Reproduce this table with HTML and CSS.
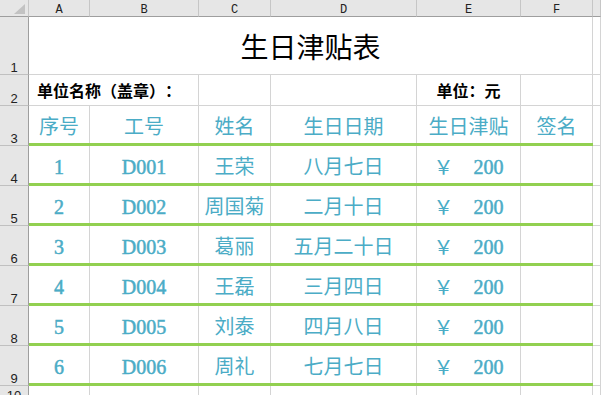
FILE: index.html
```html
<!DOCTYPE html>
<html lang="zh-CN">
<head>
<meta charset="utf-8">
<title>生日津贴表</title>
<link rel="stylesheet" href="styles.css">
</head>
<body>
<div class="sheet">
  <div class="row colhead">
    <div class="cell corner"><div class="tri"></div></div>
    <div class="cell">A</div>
    <div class="cell">B</div>
    <div class="cell">C</div>
    <div class="cell">D</div>
    <div class="cell">E</div>
    <div class="cell">F</div>
    <div class="cell"></div>
  </div>

  <div class="row r1">
    <div class="cell rh">1</div>
    <div class="cell title">生日津贴表</div>
    <div class="cell"></div>
  </div>

  <div class="row r2">
    <div class="cell rh">2</div>
    <div class="cell label">单位名称（盖章）：</div>
    <div class="cell"></div>
    <div class="cell"></div>
    <div class="cell unit">单位：元</div>
    <div class="cell"></div>
    <div class="cell"></div>
  </div>

  <div class="row data">
    <div class="cell rh">3</div>
    <div class="cell">序号</div>
    <div class="cell">工号</div>
    <div class="cell">姓名</div>
    <div class="cell">生日日期</div>
    <div class="cell">生日津贴</div>
    <div class="cell">签名</div>
    <div class="cell g"></div>
    <div class="rule"></div>
  </div>

  <div class="row data">
    <div class="cell rh">4</div>
    <div class="cell num">1</div>
    <div class="cell num">D001</div>
    <div class="cell">王荣</div>
    <div class="cell">八月七日</div>
    <div class="cell money"><span class="yen">￥</span><span class="num">200</span></div>
    <div class="cell"></div>
    <div class="cell g"></div>
    <div class="rule"></div>
  </div>

  <div class="row data">
    <div class="cell rh">5</div>
    <div class="cell num">2</div>
    <div class="cell num">D002</div>
    <div class="cell">周国菊</div>
    <div class="cell">二月十日</div>
    <div class="cell money"><span class="yen">￥</span><span class="num">200</span></div>
    <div class="cell"></div>
    <div class="cell g"></div>
    <div class="rule"></div>
  </div>

  <div class="row data">
    <div class="cell rh">6</div>
    <div class="cell num">3</div>
    <div class="cell num">D003</div>
    <div class="cell">葛丽</div>
    <div class="cell">五月二十日</div>
    <div class="cell money"><span class="yen">￥</span><span class="num">200</span></div>
    <div class="cell"></div>
    <div class="cell g"></div>
    <div class="rule"></div>
  </div>

  <div class="row data">
    <div class="cell rh">7</div>
    <div class="cell num">4</div>
    <div class="cell num">D004</div>
    <div class="cell">王磊</div>
    <div class="cell">三月四日</div>
    <div class="cell money"><span class="yen">￥</span><span class="num">200</span></div>
    <div class="cell"></div>
    <div class="cell g"></div>
    <div class="rule"></div>
  </div>

  <div class="row data">
    <div class="cell rh">8</div>
    <div class="cell num">5</div>
    <div class="cell num">D005</div>
    <div class="cell">刘泰</div>
    <div class="cell">四月八日</div>
    <div class="cell money"><span class="yen">￥</span><span class="num">200</span></div>
    <div class="cell"></div>
    <div class="cell g"></div>
    <div class="rule"></div>
  </div>

  <div class="row data">
    <div class="cell rh">9</div>
    <div class="cell num">6</div>
    <div class="cell num">D006</div>
    <div class="cell">周礼</div>
    <div class="cell">七月七日</div>
    <div class="cell money"><span class="yen">￥</span><span class="num">200</span></div>
    <div class="cell"></div>
    <div class="cell g"></div>
    <div class="rule"></div>
  </div>

  <div class="row r10">
    <div class="cell rh">10</div>
    <div class="cell"></div>
    <div class="cell"></div>
    <div class="cell"></div>
    <div class="cell"></div>
    <div class="cell"></div>
    <div class="cell"></div>
    <div class="cell"></div>
  </div>
</div>
</body>
</html>
```

FILE: styles.css
```css
html, body {
  margin: 0;
  padding: 0;
  background: #ffffff;
  overflow: hidden;
}

.sheet {
  width: 601px;
  display: flex;
  flex-direction: column;
  font-family: "Liberation Serif", "Noto Sans CJK SC", serif;
  font-kerning: none;
  font-feature-settings: "chws" 0, "halt" 0, "palt" 0;
  text-spacing-trim: space-all;
}

.row {
  display: grid;
  grid-template-columns: 29px 61px 109px 72px 146px 104px 72px 1fr;
}

.cell {
  box-sizing: border-box;
  border-right: 1px solid #d4d4d4;
  border-bottom: 1px solid #d4d4d4;
  display: flex;
  align-items: center;
  justify-content: center;
  min-width: 0;
  overflow: hidden;
  white-space: nowrap;
}

/* column header */
.colhead {
  height: 17px;
  background: #e6e6e6;
}
.colhead .cell {
  border-right-color: #c6c6c6;
  border-bottom-color: #9e9e9e;
  font-family: "Liberation Mono", monospace;
  font-size: 12px;
  line-height: 1;
  padding-top: 3px;
  color: #222;
}
.colhead .corner {
  border-right-color: #c6c6c6;
  justify-content: flex-end;
  align-items: flex-end;
  padding: 0 3px 2px 0;
}
.tri {
  width: 11px;
  height: 10px;
  background: #c2c2c2;
  clip-path: polygon(100% 0, 100% 100%, 0 100%);
}

/* row header */
.rh {
  grid-column: 1;
  background: #e6e6e6;
  border-right-color: #9e9e9e;
  border-bottom-color: #c0c0c0;
  align-items: flex-end;
  font-family: "Liberation Sans", sans-serif;
  font-size: 13px;
  line-height: 1;
  color: #222;
}

/* row 1 : title */
.r1 {
  height: 58px;
}
.title {
  grid-column: 2 / 8;
  font-family: "Noto Sans CJK SC", sans-serif;
  font-size: 28px;
  line-height: 1;
  color: #000;
}

/* row 2 */
.r2 {
  height: 31px;
}
.label {
  grid-column: 2 / 4;
  justify-content: flex-start;
  padding-left: 8px;
}
.label, .unit {
  font-family: "Noto Sans CJK SC", sans-serif;
  font-weight: bold;
  font-size: 16px;
  line-height: 1;
  color: #000;
}

/* data rows */
.data {
  height: 40px;
  grid-template-rows: 37px 3px;
}
.data .cell {
  border-bottom: none;
  font-size: 20px;
  line-height: 1;
  color: #4bacc6;
  padding-top: 5px;
}
.data .rh {
  grid-row: 1 / 3;
  border-bottom: 1px solid #c0c0c0;
  font-size: 13px;
  color: #222;
  padding-top: 0;
}
.data .g {
  grid-column: 8;
  grid-row: 1 / 3;
  border-bottom: 1px solid #d4d4d4;
}
.rule {
  grid-column: 2 / 8;
  grid-row: 2;
  background: #92d050;
}

.num {
  -webkit-text-stroke: 0.5px #4bacc6;
}

.money {
  gap: 20px;
}
.yen {
  font-family: "Noto Sans CJK SC", sans-serif;
}

.r10 {
  height: 17px;
}
```
